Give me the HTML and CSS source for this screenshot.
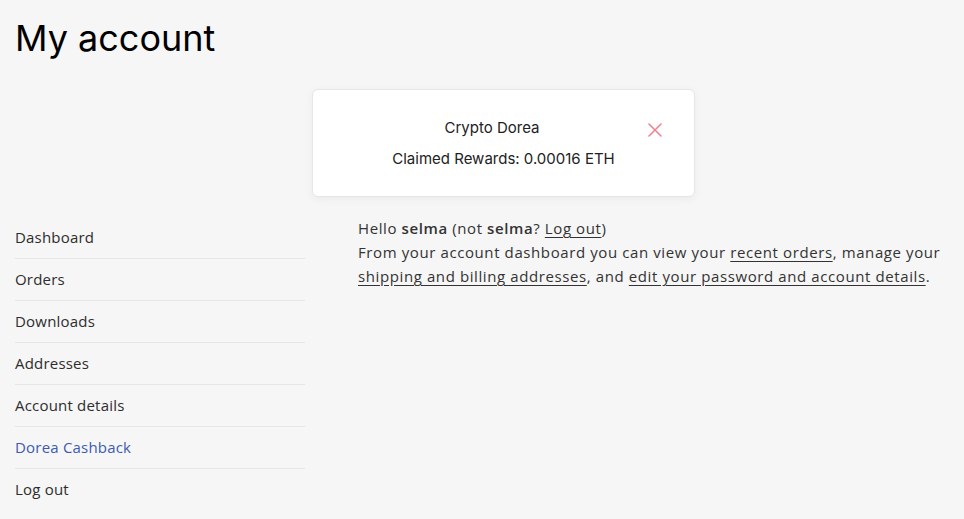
FILE: index.html
```html
<!DOCTYPE html>
<html lang="en">
<head>
<meta charset="utf-8">
<title>My account</title>
<link rel="stylesheet" href="styles.css">
</head>
<body>
<div class="page">
  <h1 class="page-title">My account</h1>

  <div class="notice">
    <div class="notice-head">
      <div class="notice-title">Crypto Dorea</div>
      <button class="notice-close" aria-label="Close">
        <svg width="14" height="14" viewBox="0 0 14 14"><path d="M1 1 L13 13 M13 1 L1 13" stroke="#f27d8c" stroke-width="1.5" stroke-linecap="round" fill="none"/></svg>
      </button>
    </div>
    <div class="notice-body">Claimed Rewards: 0.00016 ETH</div>
  </div>

  <div class="account">
    <nav class="account-nav">
      <a class="nav-item" href="#">Dashboard</a>
      <a class="nav-item" href="#">Orders</a>
      <a class="nav-item" href="#">Downloads</a>
      <a class="nav-item" href="#">Addresses</a>
      <a class="nav-item" href="#">Account details</a>
      <a class="nav-item is-active" href="#">Dorea Cashback</a>
      <a class="nav-item" href="#">Log out</a>
    </nav>
    <div class="account-content">
      <p class="text">Hello <strong>selma</strong> (not <strong>selma</strong>? <a href="#">Log out</a>)</p>
      <p class="text">From your account dashboard you can view your <a href="#">recent orders</a>, manage your <a href="#">shipping and billing addresses</a>, and <a href="#">edit your password and account details</a>.</p>
    </div>
  </div>
</div>
</body>
</html>
```

FILE: styles.css
```css
* { box-sizing: border-box; }

html, body {
  margin: 0;
  padding: 0;
  background: #f6f6f6;
}

.page {
  padding: 0 15px;
}

.page-title {
  margin: 16px 0 0;
  font-family: Inter, "Liberation Sans", sans-serif;
  font-size: 36px;
  font-weight: 400;
  line-height: 44px;
  color: #000;
}

.notice {
  margin: 29px 0 0 297px;
  width: 383px;
  background: #fff;
  border: 1px solid #e6e6e6;
  border-radius: 6px;
  box-shadow: 0 2px 10px rgba(0, 0, 0, 0.05);
  padding: 28px 28px 27px;
  font-family: Inter, "Liberation Sans", sans-serif;
  font-size: 15px;
  line-height: 20px;
  color: #222;
}

.notice-head {
  display: flex;
  align-items: flex-start;
}

.notice-title {
  flex: 1;
  text-align: center;
}

.notice-close {
  width: 24px;
  height: 14px;
  margin: 5px -1px 0 0;
  padding: 0;
  border: 0;
  background: none;
  display: flex;
  align-items: center;
  justify-content: center;
  cursor: pointer;
}

.notice-close svg { display: block; }

.notice-body {
  margin-top: 11px;
  text-align: center;
}

.account {
  display: flex;
  align-items: flex-start;
  margin-top: 19px;
  font-family: "Open Sans", "Liberation Sans", sans-serif;
  font-size: 15px;
  line-height: 24px;
  color: #333;
}

.account-nav {
  width: 290px;
  flex: none;
  margin-top: 1px;
  display: flex;
  flex-direction: column;
  letter-spacing: 0.2px;
}

.nav-item {
  display: block;
  padding: 8px 0 9px;
  border-bottom: 1px solid #e6e6e6;
  color: #2d2d2d;
  text-decoration: none;
}

.nav-item:last-child { border-bottom: 0; }

.nav-item.is-active { color: #3c5bb4; }

.account-content {
  margin-left: 53px;
  flex: 1;
  letter-spacing: 0.6px;
}

.text {
  margin: 0;
}

.text strong { font-weight: 600; color: #333; }

.text a {
  color: #333;
  text-decoration: underline;
  text-underline-offset: 3px;
}
```
